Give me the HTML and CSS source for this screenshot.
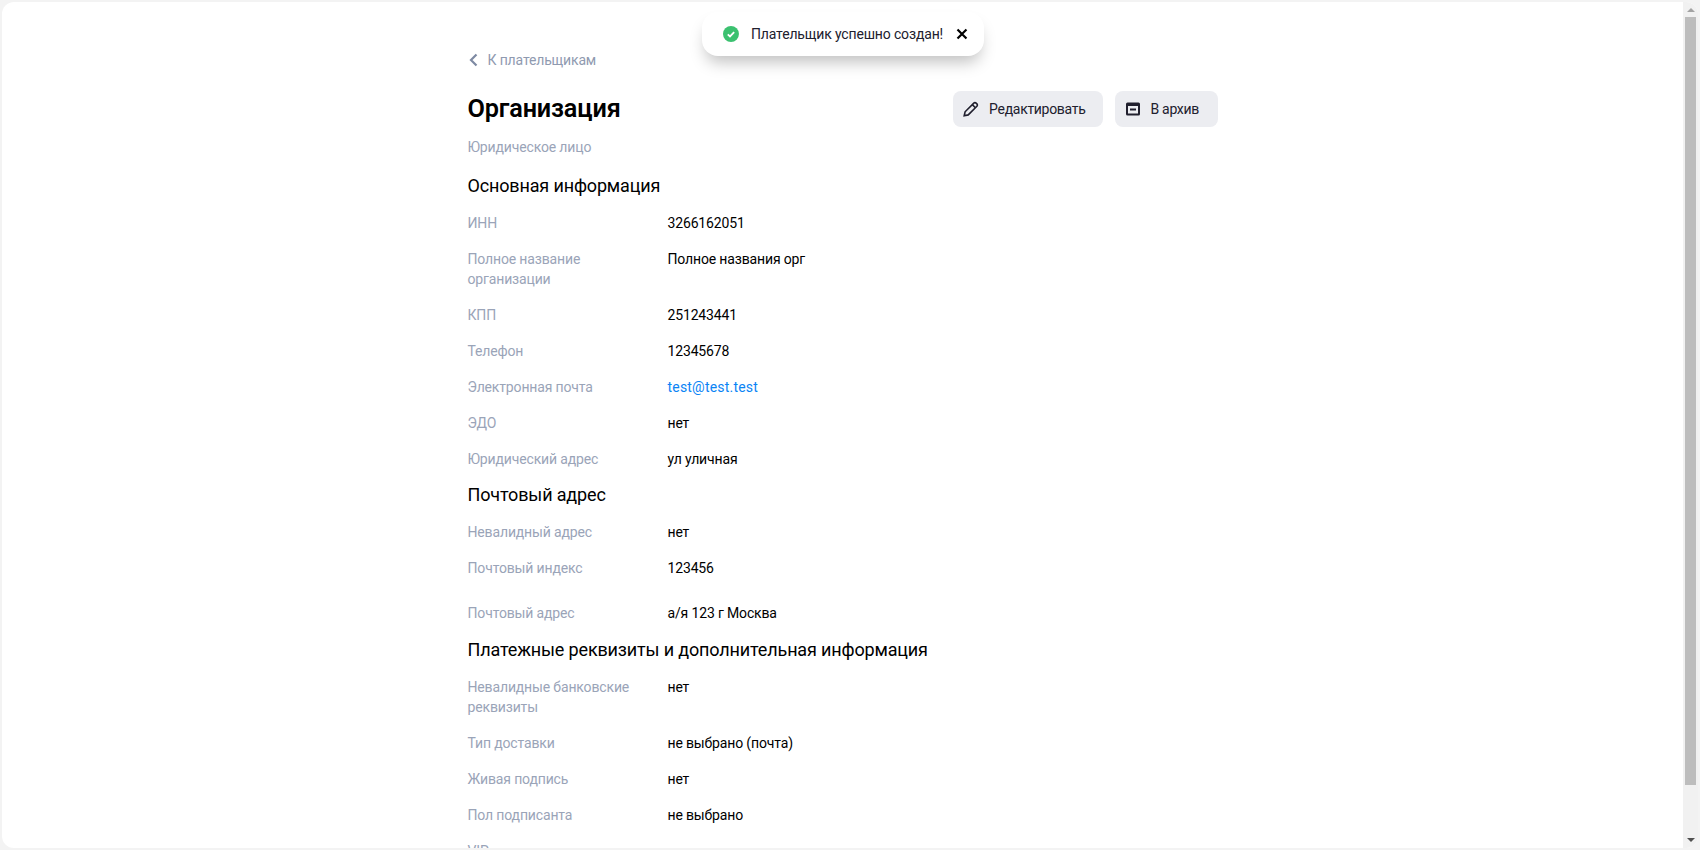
FILE: index.html
```html
<!DOCTYPE html>
<html lang="ru">
<head>
  <meta charset="UTF-8" />
  <title>Организация</title>
  <link rel="stylesheet" href="styles.css">
</head>
<body>
  <div class="frame">
    <div class="panel">
      <div class="toast">
        <svg class="toast-icon" viewBox="0 0 16 16" xmlns="http://www.w3.org/2000/svg">
          <circle cx="8" cy="8" r="8" fill="#3bc170"/>
          <path d="M4.800 8.300l2.200 2.100 4.200-4.400" fill="none" stroke="#fff" stroke-width="1.800"/>
        </svg>
        <span class="toast-text">Плательщик успешно создан!</span>
        <svg class="toast-close" viewBox="0 0 12 12" xmlns="http://www.w3.org/2000/svg">
          <path d="M1.500 1.500l9 9M10.500 1.500l-9 9" fill="none" stroke="#000" stroke-width="2.200"/>
        </svg>
      </div>

      <div class="content">
        <a class="back" href="#">
          <svg class="back-icon" viewBox="0 0 10 14" xmlns="http://www.w3.org/2000/svg">
            <path d="M8.500 1.500L3 7l5.500 5.500" fill="none" stroke="#7e8aa3" stroke-width="2.200"/>
          </svg>
          К плательщикам
        </a>

        <div class="title-row">
          <h1>Организация</h1>
          <div class="actions">
            <button class="btn">
              <svg class="btn-icon" viewBox="0 0 16 16" xmlns="http://www.w3.org/2000/svg">
                <path d="M1.200 14.800l.9-4L10.800 2.100a1.600 1.600 0 0 1 2.300 0l.8.8a1.600 1.600 0 0 1 0 2.300L5.200 13.900z" fill="none" stroke="#21202e" stroke-width="1.600"/>
                <path d="M9.300 3.600l3.100 3.100" fill="none" stroke="#21202e" stroke-width="1.600"/>
              </svg>
              Редактировать
            </button>
            <button class="btn btn-archive">
              <svg class="btn-icon" viewBox="0 0 16 16" xmlns="http://www.w3.org/2000/svg">
                <path fill-rule="evenodd" d="M2.500 1.500h11A1.500 1.500 0 0 1 15 3v10a1.500 1.500 0 0 1-1.500 1.500h-11A1.500 1.500 0 0 1 1 13V3a1.500 1.500 0 0 1 1.500-1.500zM3 5v7.500h10V5zm2 2.500h6V9.500H5z" fill="#21202e"/>
              </svg>
              В архив
            </button>
          </div>
        </div>

        <div class="subtitle">Юридическое лицо</div>

        <h2>Основная информация</h2>
        <div class="rows">
          <div class="row"><div class="label">ИНН</div><div class="value">3266162051</div></div>
          <div class="row"><div class="label">Полное название организации</div><div class="value">Полное названия орг</div></div>
          <div class="row"><div class="label">КПП</div><div class="value">251243441</div></div>
          <div class="row"><div class="label">Телефон</div><div class="value">12345678</div></div>
          <div class="row"><div class="label">Электронная почта</div><div class="value"><a class="link" href="#">test@test.test</a></div></div>
          <div class="row"><div class="label">ЭДО</div><div class="value">нет</div></div>
          <div class="row"><div class="label">Юридический адрес</div><div class="value">ул уличная</div></div>
        </div>

        <h2>Почтовый адрес</h2>
        <div class="rows">
          <div class="row"><div class="label">Невалидный адрес</div><div class="value">нет</div></div>
          <div class="row row-wide"><div class="label">Почтовый индекс</div><div class="value">123456</div></div>
          <div class="row"><div class="label">Почтовый адрес</div><div class="value">а/я 123 г Москва</div></div>
        </div>

        <h2 class="section-pay">Платежные реквизиты и дополнительная информация</h2>
        <div class="rows">
          <div class="row"><div class="label">Невалидные банковские реквизиты</div><div class="value">нет</div></div>
          <div class="row"><div class="label">Тип доставки</div><div class="value">не выбрано (почта)</div></div>
          <div class="row"><div class="label">Живая подпись</div><div class="value">нет</div></div>
          <div class="row"><div class="label">Пол подписанта</div><div class="value">не выбрано</div></div>
          <div class="row"><div class="label">VIP</div><div class="value">нет</div></div>
        </div>
      </div>

      <div class="scrollbar">
        <div class="arrow arrow-up"></div>
        <div class="thumb"></div>
        <div class="arrow arrow-down"></div>
      </div>
    </div>
  </div>
</body>
</html>
```

FILE: styles.css
```css
* {
  box-sizing: border-box;
}
body, html {
  margin: 0;
  padding: 0;
  height: 100%;
  overflow: hidden;
  font-family: Roboto, "Noto Sans", sans-serif;
  letter-spacing: -0.15px;
  background-color: #f3f3f3;
  color: #000;
}
.frame {
  height: 850px;
  padding: 2px;
}
.panel {
  position: relative;
  display: flex;
  height: 846px;
  background-color: #fff;
  border-radius: 12px;
  overflow: hidden;
}
.content {
  flex: 1;
  padding: 48px 0 0 465.500px;
  overflow: hidden;
}
.back {
  display: flex;
  align-items: center;
  height: 20px;
  font-size: 14px;
  line-height: 20px;
  color: #8f9ab0;
  text-decoration: none;
}
.back-icon {
  width: 10px;
  height: 14px;
  margin-right: 10px;
}
.title-row {
  display: flex;
  align-items: flex-start;
  justify-content: space-between;
  width: 750px;
  margin-top: 21px;
}
h1 {
  font-size: 25.250px;
  font-weight: 600;
  line-height: 36px;
  margin: 0 0 2px;
}
.actions {
  display: flex;
  gap: 12px;
}
.btn {
  display: flex;
  align-items: center;
  height: 36px;
  padding: 0 17px 0 10px;
  border: none;
  border-radius: 8px;
  background-color: #ecedf1;
  color: #21202e;
  font-family: inherit;
  font-size: 14px;
  letter-spacing: -0.3px;
}
.btn-archive {
  min-width: 103px;
}
.btn-icon {
  width: 16px;
  height: 16px;
  margin-right: 10px;
}
.subtitle {
  font-size: 14px;
  line-height: 20px;
  color: #9aa4b8;
  margin: 8px 0 17px;
}
h2 {
  font-size: 18px;
  font-weight: 400;
  line-height: 24px;
  margin: 14px 0 15px;
}
.section-pay {
  margin-top: 15px;
}
.rows {
  display: flex;
  flex-direction: column;
  gap: 16px;
}
.row {
  display: grid;
  grid-template-columns: 170px 1fr;
  column-gap: 30px;
  font-size: 14px;
  line-height: 20px;
}
.row-wide {
  margin-bottom: 9px;
}
.label {
  color: #9aa4b8;
}
.link {
  color: #0a84f5;
  letter-spacing: 0.2px;
  text-decoration: none;
}
.toast {
  position: absolute;
  top: 10px;
  left: 700px;
  display: flex;
  align-items: center;
  width: 282px;
  height: 44px;
  padding: 0 16px 0 21px;
  background-color: #fff;
  border-radius: 16px;
  box-shadow: 0 10px 16px -4px rgba(0, 0, 0, 0.25);
  font-size: 14px;
  white-space: nowrap;
  color: #21202e;
}
.toast-icon {
  width: 16px;
  height: 16px;
  margin-right: 12px;
}
.toast-close {
  width: 12px;
  height: 12px;
  margin-left: 13px;
}
.scrollbar {
  display: flex;
  flex-direction: column;
  width: 15px;
  background-color: #f1f1f1;
}
.arrow {
  flex: none;
  height: 15px;
  position: relative;
}
.arrow-up::before,
.arrow-down::before {
  content: "";
  position: absolute;
  left: 3.500px;
  border-left: 4px solid transparent;
  border-right: 4px solid transparent;
}
.arrow-up::before {
  top: 6px;
  border-bottom: 4px solid #a3a3a3;
}
.arrow-down::before {
  bottom: 6px;
  border-top: 4px solid #505050;
}
.thumb {
  flex: none;
  height: 768px;
  margin: 0 2px auto;
  background-color: #bdbdbd;
}
```
